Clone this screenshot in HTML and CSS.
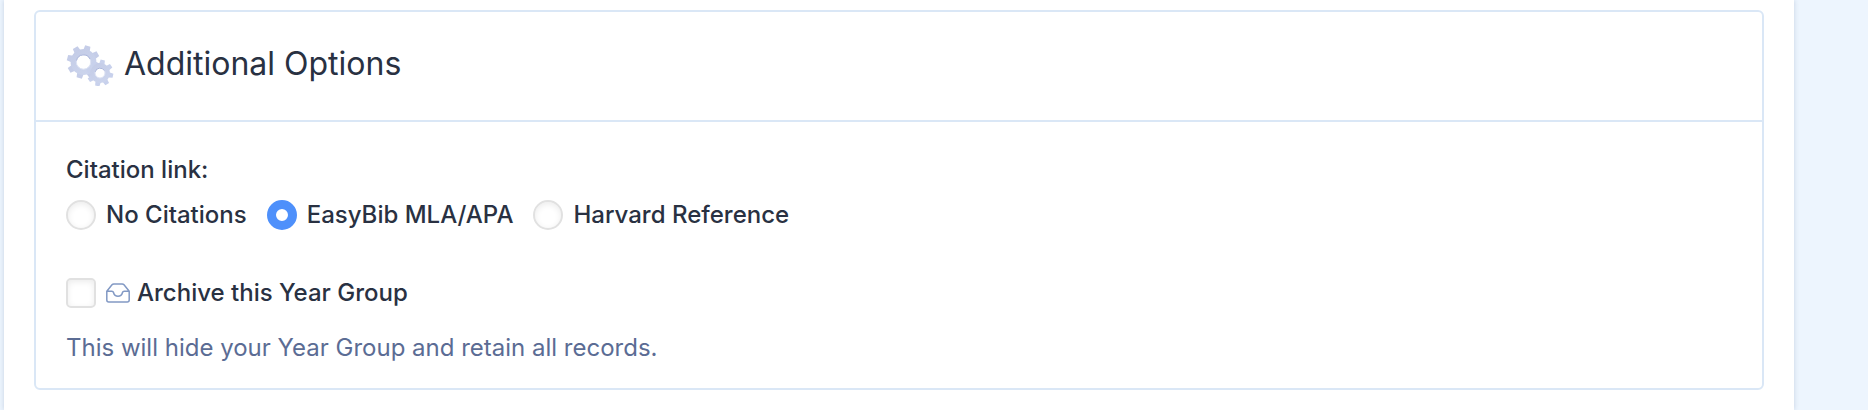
FILE: index.html
```html
<!doctype html>
<html lang="en">
<head>
<meta charset="utf-8">
<title>Additional Options</title>
<link rel="stylesheet" href="styles.css">
</head>

<body>
<main class="page">
<form>
<section class="card">
	<header class="card-header">
		<svg class="gears" viewBox="0 -2 48 44" aria-hidden="true">
			<defs>
				<linearGradient id="metal" x1="0" y1="0" x2="1" y2="1">
					<stop offset="0" stop-color="#c3cbe6"/>
					<stop offset="1" stop-color="#cdd6ee"/>
				</linearGradient>
				<g id="teeth">
					<path id="tooth" d="M-3.4-11 -2.7-16.6H2.7L3.4-11V0H-3.4z"/>
					<use href="#tooth" transform="rotate(45)"/>
					<use href="#tooth" transform="rotate(90)"/>
					<use href="#tooth" transform="rotate(135)"/>
					<use href="#tooth" transform="rotate(180)"/>
					<use href="#tooth" transform="rotate(225)"/>
					<use href="#tooth" transform="rotate(270)"/>
					<use href="#tooth" transform="rotate(315)"/>
				</g>
			</defs>
			<g transform="translate(17.5 18) rotate(15)">
				<use href="#teeth" fill="#c5cde8"/>
				<circle r="12.9" fill="url(#metal)"/>
			</g>
			<g transform="translate(34 29) rotate(12) scale(.8)">
				<use href="#teeth" fill="#c8d1ec"/>
				<circle r="12.4" fill="url(#metal)"/>
			</g>
			<circle cx="17.5" cy="18" r="7.2" fill="#fff" stroke="#dde3f4"/>
			<path d="M10.5 16.5a7.2 7.2 0 0 1 13.6-1.4" fill="none" stroke="#a9b4da"/>
			<circle cx="34" cy="29" r="5" fill="#fff" stroke="#dde3f4"/>
			<path d="M29.2 27.8a5 5 0 0 1 9.2-1.2" fill="none" stroke="#a9b4da"/>
		</svg>
		<h2>Additional Options</h2>
	</header>
	<div class="card-body">
		<fieldset class="citations">
			<legend>Citation link:</legend>
			<div class="choices">
				<label class="choice"><input type="radio" name="citation" value="none">No Citations</label>
				<label class="choice"><input type="radio" name="citation" value="easybib" checked>EasyBib MLA/APA</label>
				<label class="choice"><input type="radio" name="citation" value="harvard">Harvard Reference</label>
			</div>
		</fieldset>
		<label class="choice archive">
			<input type="checkbox" name="archive" aria-describedby="archive-help">
			<svg class="inbox" viewBox="0 0 24 20" aria-hidden="true">
				<path d="M.8 8.3 6 1.8Q6.7 1 7.8 1H16.2Q17.3 1 18 1.8L23.2 8.3V17Q23.2 19 21.2 19H2.8Q.8 19 .8 17zM.8 8.3H5.8Q7.2 8.3 7.5 9.5C8.1 11.8 9.6 13.3 12 13.3S15.9 11.8 16.5 9.5Q16.8 8.3 18.2 8.3H23.2"/>
			</svg>
			Archive this Year Group
		</label>
		<p class="help" id="archive-help">This will hide your Year Group and retain all records.</p>
	</div>
</section>
</form>
</main>
</body>
</html>
```
FILE: styles.css
```css
*{box-sizing:border-box; margin:0; padding:0}
body{background:#edf5fe; color:#293142; font-family:Inter,"Liberation Sans",sans-serif; font-size:24px; line-height:30px;}

.page{min-height:100vh; margin:0 74px 0 4px; padding:10px 30px 20px; background:#fff; box-shadow:0 0 5px rgba(40,70,110,.2);}

.card{border:2px solid #dae7f6; border-radius:6px;}
.card-header{display:flex; align-items:center; gap:10px; padding:30px 30px 34px; border-bottom:2px solid #dae7f6;}
.card-header h2{font-size:32px; font-weight:400; line-height:44px;}
.gears{width:48px; height:44px;}
.card-body{padding:33px 30px 25px;}

.citations{border:0;}
.citations legend{font-weight:500;}
.choices{display:flex; flex-wrap:wrap; gap:20px; padding-top:15px;}
.choice{display:flex; align-items:center; gap:10px; font-weight:500; cursor:pointer;}
.choice input{appearance:none; flex:none; width:30px; height:30px; border:2px solid #e1e1e1; background:#fff; box-shadow:inset 0 2px 6px rgba(0,0,0,.08);}
.choice input[type=radio]{border-radius:50%;}
.choice input[type=radio]:checked{border:9px solid #4e90fb; box-shadow:none;}
.choice input[type=checkbox]{border-radius:5px;}

.archive{gap:7px; margin-top:48px;}
.inbox{width:24px; height:20px; margin-left:3px; fill:none; stroke:#8299c4; stroke-width:1.5; stroke-linejoin:round;}
.help{margin-top:25px; color:#5b6c94;}
```
